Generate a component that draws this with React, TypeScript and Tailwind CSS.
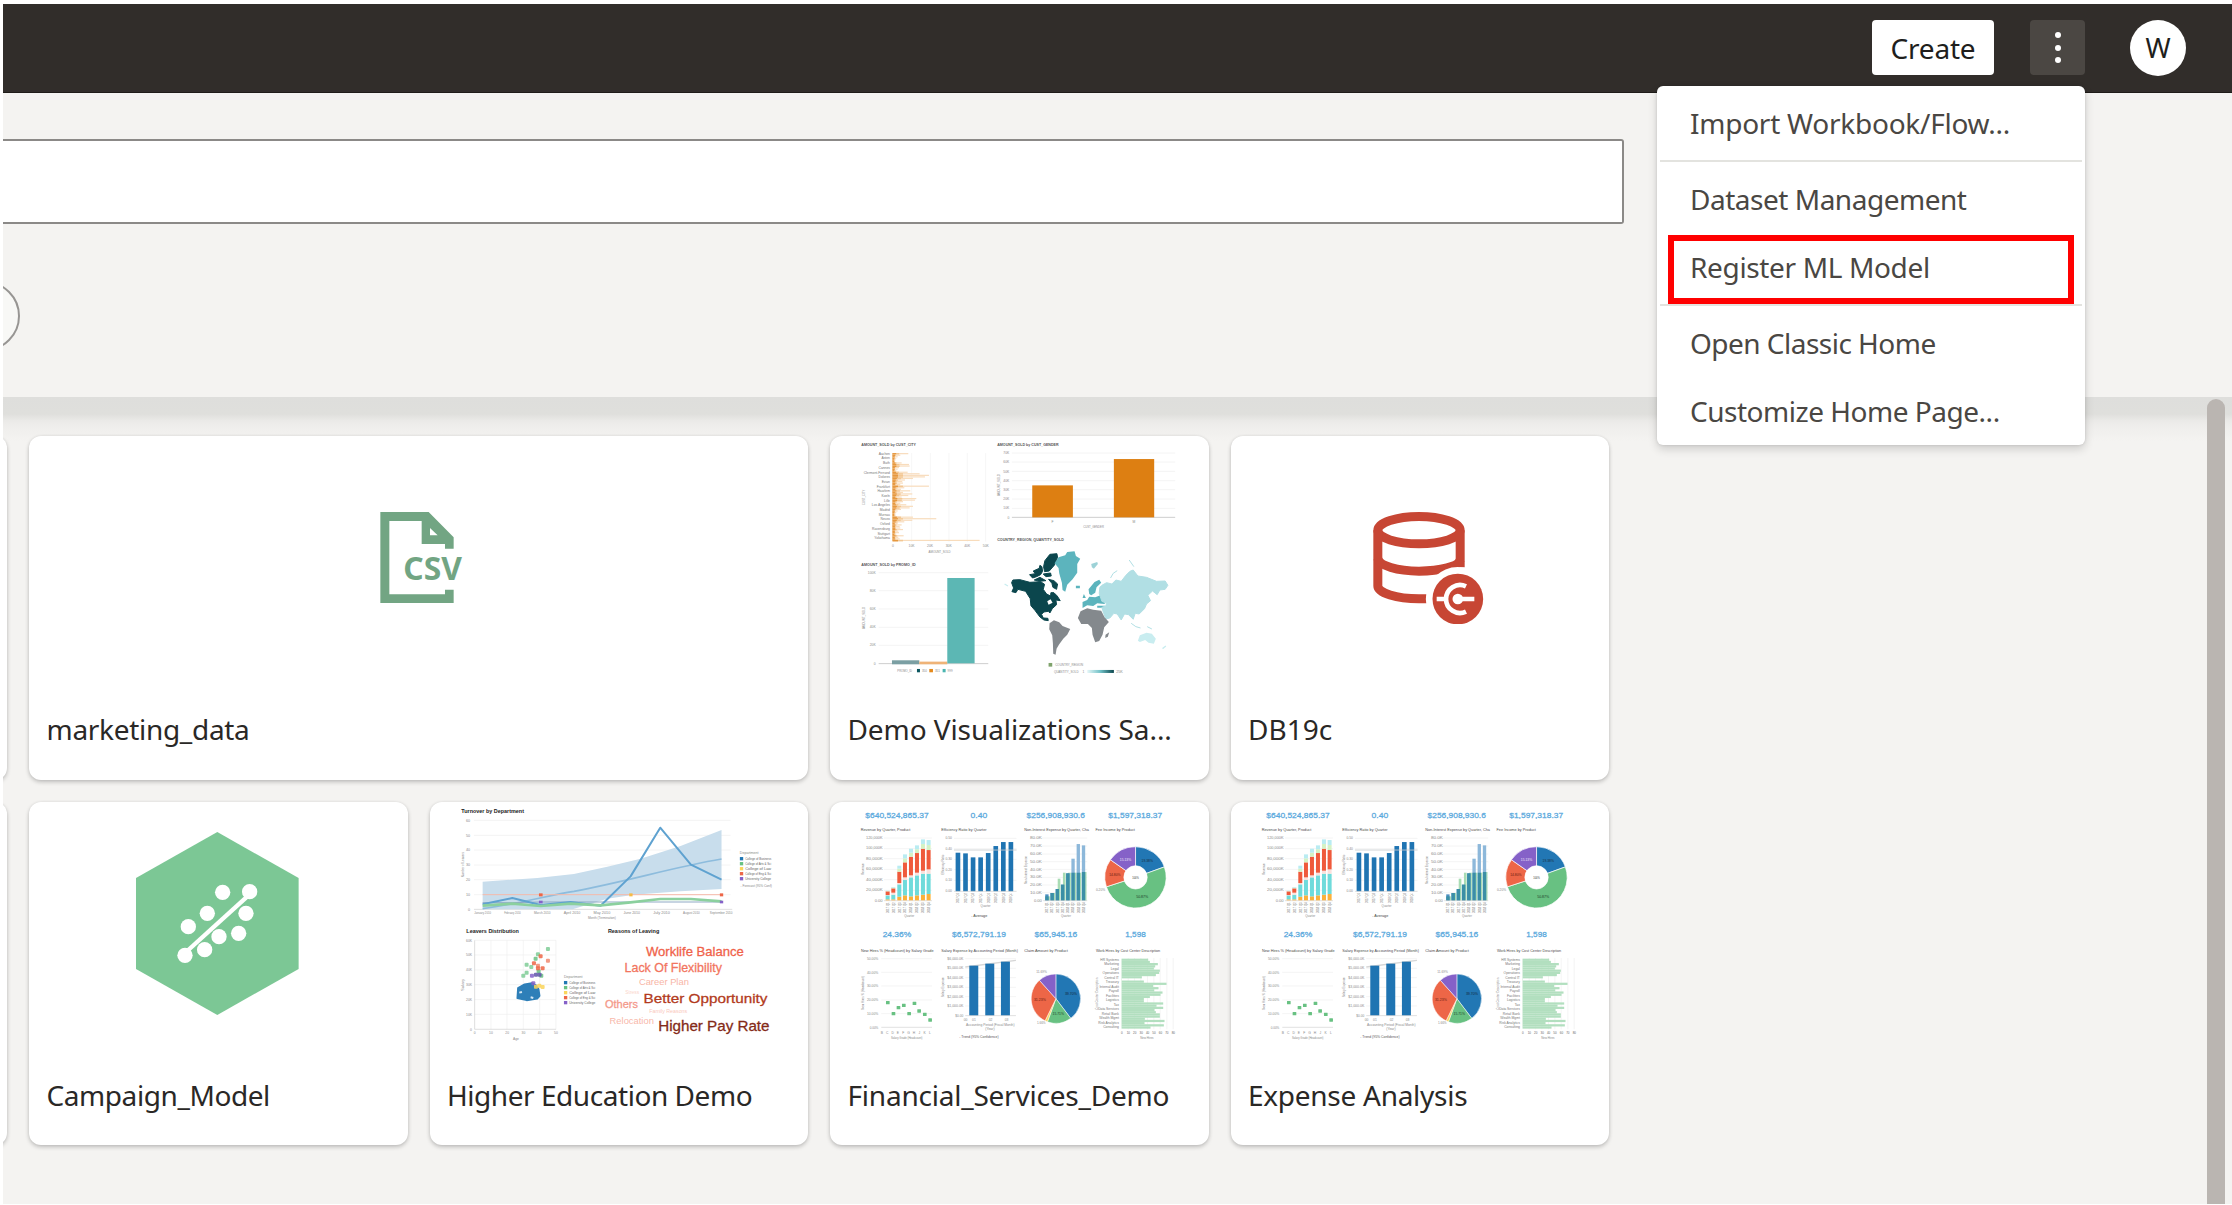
import React from "react";

/* ---------- shared drawing helpers ---------- */

type LabelProps = {
  x: number;
  y: number;
  w?: number;
  s?: number;
  c?: string;
  b?: boolean;
  a?: "start" | "middle" | "end";
  v?: boolean;
  children: string;
};

function Label({ x, y, w, s = 11, c = "#8a8a8a", b, a = "start", v, children }: LabelProps) {
  return (
    <text
      x={x}
      y={y}
      fontSize={s}
      fill={c}
      fontWeight={b ? 700 : 400}
      textAnchor={a}
      textLength={w}
      lengthAdjust="spacingAndGlyphs"
      transform={v ? `rotate(-90 ${x} ${y})` : undefined}
    >
      {children}
    </text>
  );
}

function Grid({ x1, x2, ys, c = "#eeeeee" }: { x1: number; x2: number; ys: number[]; c?: string }) {
  return (
    <g stroke={c} strokeWidth="2">
      {ys.map((y) => (
        <line key={y} x1={x1} x2={x2} y1={y} y2={y} />
      ))}
    </g>
  );
}

function slice(cx: number, cy: number, r: number, from: number, to: number) {
  const p = (deg: number) => {
    const t = ((deg - 90) * Math.PI) / 180;
    return `${cx + r * Math.cos(t)} ${cy + r * Math.sin(t)}`;
  };
  return `M${cx} ${cy}L${p(from)}A${r} ${r} 0 ${to - from > 180 ? 1 : 0} 1 ${p(to)}Z`;
}

const FONT = "[font-family:'Liberation_Sans',Arial,sans-serif]";

/* ---------- icons ---------- */

function CsvIcon() {
  return (
    <svg viewBox="1111 395 288 274" className="mt-[75.5px] mr-[2px] h-[91.3px] w-24 shrink-0" fill="#72a583">
      <path
        fillRule="evenodd"
        d="M1142 395H1287L1362 471V505H1336V491H1266V422H1169V642H1336V628H1362V669H1142ZM1291 443V465H1314Z"
      />
      <text
        x="1211"
        y="600"
        fontSize="94"
        fontWeight="700"
        textLength="176"
        lengthAdjust="spacingAndGlyphs"
        className="[font-family:'Noto_Sans','Open_Sans',sans-serif]"
      >
        CSV
      </text>
    </svg>
  );
}

function DatabaseIcon() {
  return (
    <svg viewBox="408 260 384 336" className="mt-[75.5px] h-28 w-32 shrink-0" fill="none">
      <g stroke="#c74634" strokeWidth="27">
        <path d="M473.500 315C473.500 292 530 273.500 597 273.500S720.500 292 720.500 315S664 355.500 597 355.500S473.500 338 473.500 315Z" />
        <path d="M473.500 315V482C473.500 503 530 520 597 520H624" />
        <path d="M720.500 315V426" />
        <path d="M473.500 400C478 421 532 437.500 597 437.500S715 423 720.500 404" />
      </g>
      <circle cx="713.500" cy="521" r="96" fill="#fff" />
      <rect x="625" y="505" width="40" height="60" fill="#fff" />
      <circle cx="713.500" cy="521" r="76" fill="#c74634" />
      <circle cx="713.500" cy="521" r="16" fill="#fff" />
      <path d="M713 521H763M650 521H672" stroke="#fff" strokeWidth="14" />
      <path d="M738 483A42 42 0 1 0 738 559" stroke="#fff" strokeWidth="14" />
    </svg>
  );
}

const MODEL_DOTS = [
  [667, 306], [748, 304], [621, 369], [737, 369], [564, 409], [656, 439], [715, 429], [613, 478], [554, 495],
];

function ModelIcon() {
  return (
    <svg viewBox="401 125 508 549" className="mt-[30px] h-[183px] w-[169.3px] shrink-0">
      <path d="M651 125L895 263V536L651 674L407 536V263Z" fill="#7cc795" />
      <path d="M554 488L748 312" stroke="#fff" strokeWidth="13" />
      {MODEL_DOTS.map(([x, y]) => (
        <circle key={x} cx={x} cy={y} r="23" fill="#fff" />
      ))}
    </svg>
  );
}

/* ---------- dashboard thumbnails ---------- */

const CITY_BARS = [
  46, 22, 14, 10, 8, 6, 26, 48, 50, 18, 14, 10, 44, 80, 108, 96, 60, 36, 28, 30, 22, 108, 34, 24, 52, 30, 58, 46,
  26, 70, 66, 30, 22, 40, 60, 50, 24, 14, 10, 8, 8, 60, 130, 58, 34, 14, 26, 20, 22, 30, 16, 18, 10, 32, 16, 20, 260,
];
const CITIES = [
  "Aachen", "Asten", "Bath", "Cannes", "Clermont-Ferrand", "Dolores", "Evian", "Frankfurt", "Haarlem",
  "Koeln", "Lille", "Los Angeles", "Madrid", "Murnau", "Neuss", "Oxford", "Ravensburg", "Stuttgart", "Yokohama",
];

function WorldMap() {
  return (
    <g transform="translate(480 345)" strokeLinejoin="round">
      <g fill="#0b464d" stroke="#0b464d" strokeWidth="3">
        <path d="M95 128L99 120L120 119L150 127L182 125L194 133L190 148L200 162L212 168L213 158L222 158L232 168L241 182L228 180L230 194L217 206L210 219L205 214L192 216L185 223L190 234L204 235L205 242L192 240L180 231L165 211L153 197L151 176L137 154L114 148L108 158L96 155L101 144Z" />
        <path d="M191 80L195 62L210 43L231 41L233 52L223 76L208 93L194 95Z" />
        <path d="M149 104L166 101L160 93L178 85L180 76L186 80L188 94L182 104L170 110L158 114Z" />
        <path d="M190 102L212 99L214 108L198 110Z" />
        <path d="M206 118L222 122L233 132L230 148L219 142L216 130Z" />
        <path d="M163 120L180 112L198 122L178 124Z" />
      </g>
      <path d="M202 184L212 178L218 188L206 194Z" fill="#fff" />
      <g fill="#5cb4bd">
        <path d="M224 70L236 52L256 46L262 36L284 34L288 48L301 56L292 72L292 98L278 118L262 134L256 155L248 150L246 128L238 100L236 84Z" />
        <path d="M328 162L326 148L344 126L358 119L364 128L350 142L346 158L334 166Z" />
        <path d="M308 204L308 186L322 180L328 170L346 172L362 166L378 182L374 192L352 190L340 198L322 196Z" />
        <path d="M308 174L312 162L318 174Z" />
        <path d="M288 137H300V145H288ZM352 197H376V203H352Z" />
        <path d="M334 72L352 66L354 72L342 86L336 82Z" opacity=".6" />
      </g>
      <g fill="#b1dfe4" stroke="#b1dfe4" strokeWidth="3">
        <path d="M366 184L358 160L360 142L366 136L380 128L396 132L408 120L424 124L438 106L450 94L460 90L474 108L500 112L530 124L556 123L564 136L556 148L540 150L532 164L518 153L504 166L512 182L500 192L494 206L478 222L466 220L460 238L446 224L434 222L424 240L412 222L402 220L390 234L378 237L370 216L366 202L378 198L380 190Z" />
        <path d="M448 60L462 80M392 114L400 100L412 92M454 250L468 260L482 264M502 260L516 267M488 206L494 202" fill="none" />
      </g>
      <path d="M474 302L480 286L500 278L516 281L528 296L522 311L506 308L496 300L480 306Z" fill="#c9edf0" />
      <path d="M548 326L558 318M74 132L84 138" stroke="#c9edf0" strokeWidth="4" />
      <g fill="#84898d">
        <path d="M209 250L222 241L238 247L248 258L271 267L262 284L250 296L237 314L230 326L227 344L220 341L219 310L217 286L208 268Z" />
        <path d="M302 214L322 205L340 209L364 212L374 232L387 246L373 262L368 284L358 303L346 307L338 284L336 264L324 252L304 252L294 234Z" />
        <path d="M377 284L388 277L384 290L376 294Z" />
      </g>
    </g>
  );
}

function SalesThumb() {
  return (
    <svg viewBox="30 33 1136 810" className={`h-[270px] w-full ${FONT}`}>
      <Label x={124} y={62} w={164} c="#555" b>AMOUNT_SOLD by CUST_CITY</Label>
      <g stroke="#f1f1f1" strokeWidth="2">
        {[275, 331, 387, 442, 497].map((x) => (
          <line key={x} x1={x} x2={x} y1="84" y2="350" />
        ))}
      </g>
      {CITIES.map((n, i) => (
        <Label key={n} x={210} y={89 + i * 14.1} s={10} c="#777" a="end">{n}</Label>
      ))}
      {CITY_BARS.map((w, i) => (
        <g key={i}>
          <rect x="219" y={84 + i * 4.65} width={w} height="3.600" fill="#f8dcbc" />
          <rect x="219" y={84 + i * 4.65} width={Math.min(w * 0.4, 30)} height="4.700" fill="#f3c793" />
          <rect x="217" y={84 + i * 4.65} width={5 + Math.min(w / 7, 12)} height="4.700" fill="#e6983f" />
        </g>
      ))}
      {["0", "10K", "20K", "30K", "40K", "50K"].map((n, i) => (
        <Label key={n} x={219 + i * 55.700} y={366} s={10} a="middle">{n}</Label>
      ))}
      <Label x={326} y={383} w={66} s={10}>AMOUNT_SOLD</Label>
      <Label x={134} y={240} w={46} s={10} v>CUST_CITY</Label>

      <Label x={532} y={62} w={184} c="#555" b>AMOUNT_SOLD by CUST_GENDER</Label>
      <Grid x1={576} x2={1066} ys={[84, 111, 139, 167, 194, 222, 250]} />
      {["70K", "60K", "50K", "40K", "30K", "20K", "10K", "0"].map((n, i) => (
        <Label key={n} x={568} y={87 + i * 27.700} s={10} a="end">{n}</Label>
      ))}
      <path d="M576 277H1066" stroke="#c4c4c4" strokeWidth="2.500" />
      <rect x="637" y="181" width="122" height="96" fill="#dd7f12" />
      <rect x="882" y="102" width="121" height="175" fill="#dd7f12" />
      <Label x={698} y={294} s={10} a="middle">F</Label>
      <Label x={942} y={294} s={10} a="middle">M</Label>
      <Label x={790} y={308} w={62} s={10}>CUST_GENDER</Label>
      <Label x={541} y={213} w={66} s={10} v>AMOUNT_SOLD</Label>

      <Label x={124} y={423} w={163} c="#555" b>AMOUNT_SOLD by PROMO_ID</Label>
      <Grid x1={176} x2={505} ys={[443, 497, 552, 607, 661]} />
      {["100K", "80K", "60K", "40K", "20K", "0"].map((n, i) => (
        <Label key={n} x={167} y={447 + i * 54.400} s={10} a="end">{n}</Label>
      ))}
      <path d="M176 716H505" stroke="#c4c4c4" strokeWidth="2.500" />
      <rect x="216" y="706" width="82" height="12" fill="#7b9fa3" />
      <rect x="298" y="710" width="84" height="8" fill="#efb377" />
      <rect x="382" y="459" width="82" height="256" fill="#5cb7b4" />
      <Label x={134} y={612} w={66} s={10} v>AMOUNT_SOLD</Label>
      <Label x={232} y={740} w={44} s={10}>PROMO_ID</Label>
      <rect x="291" y="732" width="9" height="10" fill="#0b565f" />
      <Label x={306} y={740} s={9}>350</Label>
      <rect x="328" y="732" width="11" height="10" fill="#e58a1c" />
      <Label x={345} y={740} s={9}>351</Label>
      <rect x="368" y="732" width="9" height="10" fill="#4bb5b0" />
      <Label x={383} y={740} s={9}>999</Label>

      <Label x={532} y={349} w={200} c="#555" b>COUNTRY_REGION, QUANTITY_SOLD</Label>
      <WorldMap />
      <rect x="686" y="714" width="11" height="11" fill="#7fa36c" />
      <Label x={706} y={723} w={84} s={10}>COUNTRY_REGION</Label>
      <Label x={702} y={743} w={74} s={10}>QUANTITY_SOLD</Label>
      <Label x={788} y={743} s={10}>1</Label>
      <defs>
        <linearGradient id="qty">
          <stop offset="0" stopColor="#e6f7f8" />
          <stop offset=".5" stopColor="#6fc0c6" />
          <stop offset="1" stopColor="#0b464d" />
        </linearGradient>
      </defs>
      <rect x="802" y="735" width="80" height="9" fill="url(#qty)" />
      <Label x={889} y={743} w={20} s={10}>25K</Label>
    </svg>
  );
}

const DEPTS: [string, string][] = [
  ["#2277b4", "College of Business"],
  ["#68c182", "College of Arts & Sci"],
  ["#fad55c", "College of Law"],
  ["#ed6647", "College of Eng & Sci"],
  ["#8561c8", "University College"],
];

function DeptLegend({ x, y, step }: { x: number; y: number; step: number }) {
  return (
    <g>
      {DEPTS.map(([c, n], i) => (
        <g key={n}>
          <rect x={x} y={y + i * step - 5} width="10" height="10" fill={c} />
          <Label x={x + 16} y={y + i * step + 4} w={78} s={10} c="#666">{n}</Label>
        </g>
      ))}
    </g>
  );
}

const MONTHS = ["January 2010", "February 2010", "March 2010", "April 2010", "May 2010", "June 2010", "July 2010", "August 2010", "September 2010"];

const WORDS: [string, number, number, number, number, string][] = [
  ["Worklife Balance", 676, 482, 294, 36, "#f0624a"],
  ["Lack Of Flexibility", 612, 531, 292, 36, "#f27560"],
  ["Career Plan", 655, 570, 150, 27, "#f8b5a6"],
  ["Stress", 614, 597, 42, 14, "#fbd5cb"],
  ["Others", 553, 637, 99, 31, "#f4998a"],
  ["Better Opportunity", 669, 623, 372, 40, "#b23a20"],
  ["Family Reasons", 686, 653, 114, 14, "#fac8bc"],
  ["Relocation", 567, 687, 133, 26, "#f8b8aa"],
  ["Higher Pay Rate", 713, 708, 334, 42, "#842a18"],
];

const LEAVERS: [number, number, string][] = [
  [382, 461, "#7fcd97"], [352, 477, "#7fcd97"], [345, 490, "#68c182"], [318, 508, "#7fcd97"], [318, 532, "#7fcd97"],
  [308, 541, "#7fcd97"], [354, 528, "#68c182"], [332, 515, "#7fcd97"], [362, 541, "#68c182"], [360, 483, "#ed6647"],
  [382, 496, "#f08a70"], [340, 504, "#ed6647"], [352, 511, "#f08a70"], [366, 519, "#ed6647"], [352, 519, "#ed6647"],
  [334, 541, "#8561c8"], [346, 538, "#5f55a8"], [357, 538, "#5f55a8"], [338, 564, "#8561c8"], [356, 571, "#fad55c"],
  [366, 575, "#fad55c"], [346, 574, "#fad55c"],
];

function EducationThumb() {
  return (
    <svg viewBox="28 20 1136 810" className={`h-[270px] w-full ${FONT}`}>
      <Label x={122} y={54} w={188} s={15} c="#222" b>Turnover by Department</Label>
      <Grid x1={160} x2={930} ys={[75, 120, 164, 209, 253, 298]} />
      <path d="M160 342H935" stroke="#cfcfcf" strokeWidth="2" />
      {["60", "50", "40", "30", "20", "10", "0"].map((n, i) => (
        <Label key={n} x={148} y={79 + i * 44.500} s={11} a="end">{n}</Label>
      ))}
      <path d="M186 259L350 248L460 236L560 214L660 190L780 152L903 104V281L780 288L640 298L560 310L456 342H186Z" fill="#c8ddec" />
      <path d="M186 340C300 325 380 300 460 288C620 258 760 215 903 191" fill="none" stroke="#8dbcdd" strokeWidth="5" />
      <path d="M186 298H903" stroke="#f6b9aa" strokeWidth="3" />
      <path d="M186 322L275 322L360 320H903" stroke="#8fa9c4" strokeWidth="3" fill="none" />
      <path d="M186 327L275 308L360 329L450 320L540 331L630 243L719 97L811 208L903 253" fill="none" stroke="#5fa2d0" strokeWidth="6" strokeLinejoin="round" />
      <path d="M186 331L275 325L360 332L450 325L540 330L630 321L719 311L811 311L903 318" fill="none" stroke="#8bd09e" strokeWidth="8" />
      <rect x="355" y="294" width="11" height="9" fill="#ed6647" />
      <rect x="626" y="294" width="10" height="9" fill="#f6bb45" />
      <rect x="898" y="294" width="10" height="9" fill="#ed6647" />
      <rect x="355" y="316" width="11" height="8" fill="#8561c8" />
      <rect x="898" y="316" width="10" height="8" fill="#8561c8" />
      {MONTHS.map((n, i) => (
        <Label key={n} x={186 + i * 89.500} y={357} w={i === 8 ? 68 : 50} s={10} a="middle">{n}</Label>
      ))}
      <Label x={502} y={372} w={84} s={10}>Month (Termination)</Label>
      <Label x={131} y={246} w={76} s={10} v>Number of Leavers</Label>
      <Label x={958} y={175} w={56} s={10}>Department</Label>
      <DeptLegend x={958} y={190} step={15} />
      <Label x={960} y={276} w={94} s={10} c="#888">- Forecast (95% Conf)</Label>

      <Label x={137} y={413} w={158} s={15} c="#222" b>Leavers Distribution</Label>
      <Grid x1={162} x2={406} ys={[435, 479, 524, 568, 613, 657]} />
      <g stroke="#eeeeee" strokeWidth="2">
        {[211, 259, 308, 357, 406].map((x) => (
          <line key={x} x1={x} x2={x} y1="435" y2="702" />
        ))}
      </g>
      <path d="M162 435V702H406" fill="none" stroke="#cfcfcf" strokeWidth="2" />
      {["60K", "50K", "40K", "30K", "20K", "10K", "0"].map((n, i) => (
        <Label key={n} x={154} y={439 + i * 44.500} s={10} a="end">{n}</Label>
      ))}
      {["0", "10", "20", "30", "40", "50"].map((n, i) => (
        <Label key={n} x={162 + i * 48.800} y={717} s={10} a="middle">{n}</Label>
      ))}
      <Label x={277} y={733} s={10}>Age</Label>
      <Label x={131} y={587} w={36} s={10} v>Salary</Label>
      <path d="M292 578L312 567L334 563L346 570L354 582L357 602L350 610L318 615L290 609Z" fill="#2e7fb8" stroke="#2e7fb8" strokeWidth="5" strokeLinejoin="round" />
      <path d="M296 592L304 590M330 606L338 608" stroke="#d4e6f2" strokeWidth="6" />
      {LEAVERS.map(([x, y, c], i) => (
        <rect key={i} x={x - 6} y={y - 6} width="12" height="12" rx="3" fill={c} opacity="0.85" />
      ))}
      <Label x={430} y={547} w={56} s={10}>Department</Label>
      <DeptLegend x={430} y={562} step={15} />

      <Label x={562} y={413} w={154} s={15} c="#222" b>Reasons of Leaving</Label>
      {WORDS.map(([t, x, y, w, s, c]) => (
        <text key={t} x={x} y={y} fontSize={s} fill={c} stroke={c} strokeWidth={s > 30 ? 0.8 : 0} textLength={w} lengthAdjust="spacingAndGlyphs">
          {t}
        </text>
      ))}
    </svg>
  );
}

/* x, orange top, cyan top, red bottom, red top, light top */
const REVENUE = [
  [203, 312, 300, 299, 288, 286], [220, 312, 298, 292, 279, 275], [238, 304, 267, 263, 229, 211],
  [255, 300, 254, 246, 201, 177], [273, 303, 246, 240, 184, 160], [291, 300, 240, 232, 173, 150],
  [309, 298, 235, 226, 160, 132], [326, 296, 235, 222, 164, 134],
];
const EFFICIENCY = [172, 174, 186, 186, 173, 152, 140, 140];
const EXPENSE = [[297, 303], [293, 293], [281, 250], [268, 232], [234, 232], [190, 232], [146, 232], [150, 230]];
const SCATTER = [[203, 622], [220, 655], [235, 637], [251, 630], [267, 655], [283, 624], [297, 647], [314, 657], [330, 674]];
const CENTERS = [
  985, 990, 1014, 1006, 1002, 1020, 1018, 1008, 966, 906, 972, 1040, 1000, 1016, 1003, 1028, 1022, 990, 972, 972,
  1030, 1010, 1030, 1004, 1008, 1020, 1020, 975, 1034, 974, 1032, 992,
];
const QUARTERS = ["2017 Q1", "2017 Q2", "2017 Q3", "2017 Q4", "2018 Q1", "2018 Q2", "2018 Q3", "2018 Q4"];
const KPIS: [string, number, number, number][] = [
  ["$640,524,865.37", 136, 67, 190], ["0.40", 452, 67, 50], ["$256,908,930.6", 620, 67, 175], ["$1,597,318.37", 865, 67, 162],
  ["24.36%", 188, 425, 86], ["$6,572,791.19", 396, 425, 162], ["$65,945.16", 644, 425, 128], ["1,598", 916, 425, 62],
];
const CHART_TITLES: [string, number, number, number][] = [
  ["Revenue by Quarter, Product", 122, 107, 149], ["Efficiency Ratio by Quarter", 364, 107, 136],
  ["Non-Interest Expense by Quarter, Cha", 613, 107, 194], ["Fee Income by Product", 827, 107, 118],
  ["New Hires % (Headcount) by Salary Grade", 123, 469, 218], ["Salary Expense by Accounting Period (Month)", 364, 469, 230],
  ["Claim Amount by Product", 613, 469, 131], ["Work Hires by Cost Center Description", 828, 469, 193],
];
const CENTER_NAMES = [
  "HR Systems", "Marketing", "Legal", "Operations", "Central IT", "Treasury", "Internal Audit", "Payroll",
  "Facilities", "Logistics", "Tax", "Data Services", "Retail Bank", "Wealth Mgmt", "Risk Analytics", "Consulting",
];

function FinanceThumb() {
  return (
    <svg viewBox="30 20 1136 810" className={`h-[270px] w-full ${FONT}`}>
      {KPIS.map(([t, x, y, w]) => (
        <text key={t} x={x} y={y} fontSize={24} fill="#5aa9dd" stroke="#5aa9dd" strokeWidth="0.8" textLength={w} lengthAdjust="spacingAndGlyphs">
          {t}
        </text>
      ))}
      {CHART_TITLES.map(([t, x, y, w]) => (
        <Label key={t} x={x} y={y} w={w} s={12} c="#4a4a4a">{t}</Label>
      ))}

      <Grid x1={192} x2={336} ys={[128, 160, 190, 222, 253, 285]} />
      <path d="M192 316H336" stroke="#d0d0d0" strokeWidth="2" />
      {["120,000K", "100,000K", "80,000K", "60,000K", "40,000K", "20,000K", "0.00"].map((n, i) => (
        <Label key={n} x={188} y={131 + i * 31.300} w={i === 6 ? 24 : 50} s={10} a="end">{n}</Label>
      ))}
      <Label x={132} y={238} w={34} s={10} v>Revenue</Label>
      {REVENUE.map(([x, o, c, rb, rt, t], i) => (
        <g key={x}>
          <rect x={x - 6} y={o} width="12" height={315 - o} fill="#fbb03b" />
          <rect x={x - 6} y={c} width="12" height={o - c} fill="#6fdbdb" />
          <rect x={x - 6} y={rb} width="12" height={Math.max(c - rb, 0)} fill="#fbe0dc" />
          <rect x={x - 6} y={rt} width="12" height={rb - rt} fill="#ef5a3c" />
          <rect x={x - 6} y={(rt + t) / 2} width="12" height={(rt - t) / 2} fill="#d5f2c4" />
          <rect x={x - 6} y={t} width="12" height={(rt - t) / 2} fill="#b9ecf2" />
          <Label x={x + 4} y={353} w={32} s={10} c="#777" v>{QUARTERS[i]}</Label>
        </g>
      ))}
      <Label x={253} y={366} w={30} s={10}>Quarter</Label>

      <Grid x1={402} x2={590} ys={[129, 160, 192, 223, 255]} />
      {["0.50", "0.40", "0.30", "0.20", "0.10", "0.00"].map((n, i) => (
        <Label key={n} x={396} y={132 + i * 31.500} s={10} a="end">{n}</Label>
      ))}
      {EFFICIENCY.map((y, i) => (
        <g key={i}>
          <rect x={407 + i * 22.700} y={y} width="14" height={288 - y} fill="#1f74b2" />
          <Label x={418 + i * 22.700} y={323} w={30} s={10} c="#777" v>{QUARTERS[i]}</Label>
        </g>
      ))}
      <path d="M402 164H590" stroke="#c9ccce" strokeWidth="3" opacity=".8" />
      <path d="M402 288H590" stroke="#d0d0d0" strokeWidth="2" />
      <Label x={373} y={238} w={60} s={10} v>Efficiency Ratio</Label>
      <Label x={482} y={336} w={30} s={10}>Quarter</Label>
      <Label x={454} y={364} w={48} s={10} c="#444">- Average</Label>

      <Grid x1={666} x2={802} ys={[128, 152, 176, 199, 222, 246, 269, 292]} />
      {["80.0K", "70.0K", "60.0K", "50.0K", "40.0K", "30.0K", "20.0K", "10.0K", "0.00"].map((n, i) => (
        <Label key={n} x={666} y={132 + i * 23.400} w={i === 8 ? 24 : 36} s={10} a="end">{n}</Label>
      ))}
      {EXPENSE.map(([b, g], i) => (
        <g key={i}>
          <rect x={677 + i * 15.700 + 5} y={g} width="8" height={316 - g} fill="#a9dcb4" />
          <rect x={676 + i * 15.700} y={b} width="10" height={316 - b} fill={i > 4 ? "#8db8da" : "#4d90c2"} />
          <rect x={676 + i * 15.700} y={Math.max(b, g)} width="10" height={316 - Math.max(b, g)} fill="#3b8fa6" />
          <Label x={685 + i * 15.700} y={353} w={32} s={10} c="#777" v>{QUARTERS[i]}</Label>
        </g>
      ))}
      <path d="M670 316H802" stroke="#d0d0d0" strokeWidth="2" />
      <Label x={621} y={266} w={84} s={10} v>Non-Interest Expense</Label>
      <Label x={723} y={366} w={30} s={10}>Quarter</Label>

      <g stroke="#fff" strokeWidth="2">
        <path d={slice(947, 246, 92, 0, 70)} fill="#2277b4" />
        <path d={slice(947, 246, 92, 70, 252)} fill="#68c182" />
        <path d={slice(947, 246, 92, 252, 305)} fill="#ed6647" />
        <path d={slice(947, 246, 92, 305, 360)} fill="#8561c8" />
        <circle cx="947" cy="246" r="35" fill="#fff" />
      </g>
      <Label x={965} y={200} w={34} s={11} c="#1b2d3a">19.38%</Label>
      <Label x={949} y={308} w={36} s={11} c="#1d4029">50.87%</Label>
      <Label x={868} y={242} w={34} s={11} c="#6b2010">14.80%</Label>
      <Label x={900} y={196} w={34} s={11} c="#eee6fa">15.13%</Label>
      <Label x={937} y={250} w={20} s={11} c="#333">100%</Label>
      <Label x={828} y={287} w={28} s={10}>0.20%</Label>

      <Grid x1={184} x2={336} ys={[490, 531, 572, 614, 655]} />
      <path d="M184 696H336" stroke="#d0d0d0" strokeWidth="2" />
      {["50.00%", "40.00%", "30.00%", "20.00%", "10.00%", "0.00%"].map((n, i) => (
        <Label key={n} x={175} y={494 + i * 41.200} w={i === 5 ? 26 : 34} s={10} a="end">{n}</Label>
      ))}
      {SCATTER.map(([x, y]) => (
        <rect key={x} x={x - 5} y={y - 5} width="11" height="10" rx="1" fill="#68c182" />
      ))}
      {["B", "C", "D", "E", "F", "G", "H", "J", "K", "L"].map((n, i) => (
        <Label key={n} x={186 + i * 16} y={716} s={10} a="middle">{n}</Label>
      ))}
      <Label x={213} y={732} w={94} s={10}>Salary Grade (Headcount)</Label>
      <Label x={132} y={643} w={100} s={10} v>New Hires % (Headcount)</Label>

      <Grid x1={436} x2={588} ys={[490, 519, 547, 576, 604, 632]} />
      {["$6,000.0K", "$5,000.0K", "$4,000.0K", "$3,000.0K", "$2,000.0K", "$1,000.0K", "$0.00"].map((n, i) => (
        <Label key={n} x={430} y={494 + i * 28.400} w={i === 6 ? 24 : 48} s={10} a="end">{n}</Label>
      ))}
      <path d="M436 515L588 495" stroke="#d6d6d6" strokeWidth="4" />
      {[[462, 511], [510, 505], [557, 499]].map(([x, y]) => (
        <rect key={x} x={x - 14} y={y} width="27" height={661 - y} fill="#1f74b2" />
      ))}
      <path d="M436 661H588" stroke="#d0d0d0" strokeWidth="2" />
      {["00", "01", "02", "03"].map((n, i) => (
        <Label key={n} x={[437, 462, 512, 560][i]} y={676} s={10} a="middle">{n}</Label>
      ))}
      <Label x={438} y={692} w={146} s={10}>Accounting Period (Fiscal Month)</Label>
      <Label x={496} y={703} w={28} s={10}>(Year)</Label>
      <Label x={418} y={727} w={118} s={10} c="#555">- Trend (95% Confidence)</Label>
      <Label x={373} y={606} w={60} s={10} v>Salary Expense</Label>

      <g stroke="#fff" strokeWidth="1.500">
        <path d={slice(708, 610, 74, 0, 143)} fill="#2277b4" />
        <path d={slice(708, 610, 74, 143, 200)} fill="#68c182" />
        <path d={slice(708, 610, 74, 200, 206)} fill="#fad55c" />
        <path d={slice(708, 610, 74, 206, 318)} fill="#ed6647" />
        <path d={slice(708, 610, 74, 318, 360)} fill="#8561c8" />
      </g>
      <Label x={735} y={598} w={36} s={11} c="#14283a">39.70%</Label>
      <Label x={698} y={660} w={34} s={11} c="#1d4029">15.71%</Label>
      <Label x={642} y={618} w={36} s={11} c="#6b2010">31.23%</Label>
      <Label x={649} y={534} w={32} s={10}>11.69%</Label>
      <Label x={651} y={687} w={26} s={10}>1.66%</Label>

      <g stroke="#efefef" strokeWidth="2">
        {[925, 944, 963, 983, 1002, 1021, 1041, 1060].map((x) => (
          <line key={x} x1={x} x2={x} y1="488" y2="702" />
        ))}
      </g>
      {CENTERS.map((x, i) => (
        <rect key={i} x="905" y={490 + i * 6.560} width={x - 905} height="6.700" fill="#b2dfbf" />
      ))}
      {CENTER_NAMES.map((n, i) => (
        <Label key={n} x={897} y={496 + i * 13.500} s={10} c="#777" a="end">{n}</Label>
      ))}
      {["0", "10", "20", "30", "40", "50", "60", "70", "80"].map((n, i) => (
        <Label key={n} x={906 + i * 19.300} y={715} s={9} c="#666" a="middle">{n}</Label>
      ))}
      <Label x={961} y={732} w={40} s={10}>New Hires</Label>
      <Label x={835} y={643} w={96} s={10} v>Cost Center Description</Label>
    </svg>
  );
}

/* ---------- page ---------- */

function Card({ title, className = "", children }: { title?: React.ReactNode; className?: string; children?: React.ReactNode }) {
  return (
    <article
      className={`flex h-[343.5px] flex-col overflow-hidden rounded-xl bg-white shadow-[0_2px_4px_rgba(0,0,0,0.22),0_0_3px_rgba(0,0,0,0.06)] ${className}`}
    >
      <div className="flex h-[269px] shrink-0 justify-center">{children}</div>
      <h3 className="truncate pl-[17.5px] text-[28px] leading-[48px] text-[#2a2826]">{title}</h3>
    </article>
  );
}

function MenuItem({ children, className = "" }: { children: React.ReactNode; className?: string }) {
  return (
    <div className={`relative flex h-[68.5px] items-center pl-[33px] text-[28px] whitespace-nowrap text-[#4a4743] ${className}`}>
      {children}
    </div>
  );
}

function Divider() {
  return <div className="mx-[3px] mt-[2px] mb-[3px] h-[2px] bg-[#e3e3df]" />;
}

export default function App() {
  return (
    <div className="h-[1205px] w-[2232px] overflow-hidden bg-white pt-1 pb-px pl-[3px] [font-family:'Noto_Sans','Open_Sans',sans-serif]">
      <div className="flex h-full flex-col overflow-hidden bg-[#f4f3f1]">
        <header className="flex h-[89px] shrink-0 items-center justify-end border-b border-[#1f1c19] bg-[#312d2a] pr-[46px] pb-px">
          <button className="mr-9 flex h-[55px] w-[122px] items-center justify-center rounded-[4px] bg-white pt-px text-[28px] tracking-[-0.2px] text-[#201e1c]">
            Create
          </button>
          <div className="relative mr-[45px]">
            <button className="flex h-[55px] w-[55px] flex-col items-center justify-center gap-[6.5px] rounded-[4px] bg-[#4b4743]">
              <span className="size-[6px] rounded-full bg-white" />
              <span className="size-[6px] rounded-full bg-white" />
              <span className="size-[6px] rounded-full bg-white" />
            </button>
            <nav className="absolute top-[66px] right-0 z-10 h-[359px] w-[428px] rounded-md bg-white pt-[3px] shadow-[0_4px_10px_rgba(0,0,0,0.16),0_0_3px_rgba(0,0,0,0.12)]">
              <MenuItem className="tracking-[-0.25px]">Import Workbook/Flow...</MenuItem>
              <Divider />
              <MenuItem className="tracking-[-0.48px]">Dataset Management</MenuItem>
              <MenuItem className="tracking-[-0.35px]">
                Register ML Model
                <span className="absolute top-[2px] left-[11px] z-10 h-[69px] w-[406px] border-[6px] border-[#ff0000]" />
              </MenuItem>
              <Divider />
              <MenuItem className="tracking-[-0.52px]">Open Classic Home</MenuItem>
              <MenuItem className="tracking-[-0.48px]">Customize Home Page...</MenuItem>
            </nav>
          </div>
          <div className="flex size-14 items-center justify-center rounded-full bg-white pt-px text-[27px] text-[#201e1c]">
            W
          </div>
        </header>

        <section className="h-[304px] shrink-0 pt-[46px]">
          <div className="h-[85px] w-[1621px] rounded-r-[3px] border-2 border-l-0 border-[#8b8987] bg-white" />
          <div className="mt-[57px] -ml-[83px] h-[70px] w-[100px] rounded-full border-2 border-[#979593] bg-[#f8f8f6]" />
        </section>

        <main className="flex min-h-0 flex-1 justify-between bg-[linear-gradient(to_bottom,#dededc_0px,#dfdfdc_17px,#ebeae8_24px,#efeeec_30px,#f4f3f1_44px)]">
          <div className="-ml-[374.5px] grid auto-rows-min grid-cols-[repeat(5,378.5px)] gap-[22px] pt-[39px]">
            <Card />
            <Card className="col-span-2" title={<span className="tracking-[-0.3px]">marketing_data</span>}>
              <CsvIcon />
            </Card>
            <Card title={<span className="tracking-[-0.08px]">Demo Visualizations Sa...</span>}>
              <SalesThumb />
            </Card>
            <Card title="DB19c">
              <DatabaseIcon />
            </Card>
            <Card />
            <Card title={<span className="tracking-[-0.42px]">Campaign_Model</span>}>
              <ModelIcon />
            </Card>
            <Card title={<span className="tracking-[-0.45px]">Higher Education Demo</span>}>
              <EducationThumb />
            </Card>
            <Card title={<span className="tracking-[-0.22px]">Financial_Services_Demo</span>}>
              <FinanceThumb />
            </Card>
            <Card title={<span className="tracking-[-0.27px]">Expense Analysis</span>}>
              <FinanceThumb />
            </Card>
          </div>
          <div className="mt-[2px] mr-[7px] w-[18px] shrink-0 rounded-t-full bg-[#bab5b1]" />
        </main>
      </div>
    </div>
  );
}
